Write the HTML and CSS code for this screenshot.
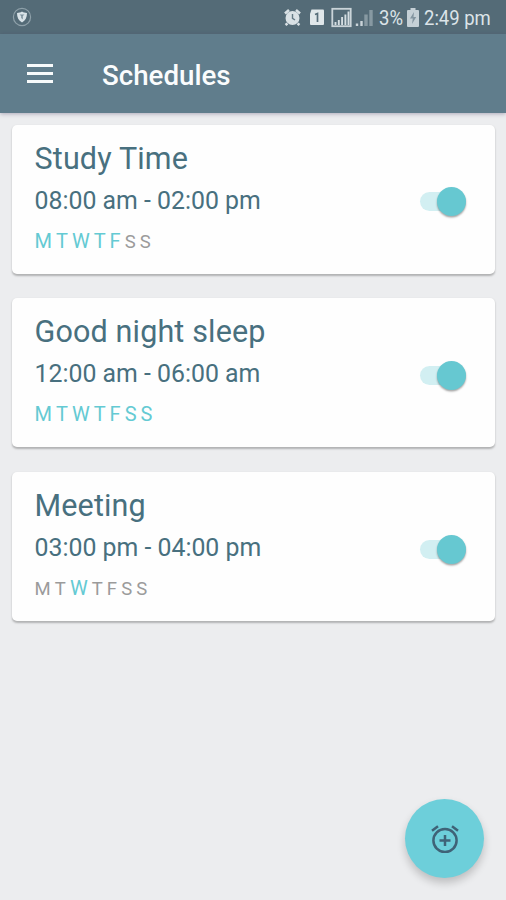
FILE: index.html
```
<!DOCTYPE html>
<html lang="en">
<head>
<meta charset="utf-8">
<meta name="viewport" content="width=device-width, initial-scale=1">
<title>Schedules</title>
<link rel="stylesheet" href="styles.css">
</head>
<body>

<div class="statusbar">
  <svg class="shield" width="20" height="20" viewBox="0 0 20 20">
    <circle cx="10" cy="10" r="8.6" fill="none" stroke="#8ea0a9" stroke-width="1.2"/>
    <path d="M10 4.6C8.5 5.6 7 6 5 6c0 4.500 1.500 7.500 5 9.600 3.500-2.100 5-5.100 5-9.600-2 0-3.500-.4-5-1.400z" fill="#d9e3e8"/>
    <path d="M7.500 7.500h5L10.800 9v3.500L9.200 11V9z" fill="#7d929d"/>
  </svg>
  <div class="status-right">
    <svg class="status-icons" width="92" height="22" viewBox="0 0 92 22">
      <circle cx="9.500" cy="12" r="7" fill="#d9e1e5"/>
      <path d="M2 7.500l4-3.500M17 7.500l-4-3.500M4.500 17.500l-2 1.500M14.500 17.500l2 1.500" stroke="#d9e1e5" stroke-width="2.600"/>
      <path d="M9.500 8v4.300l2.500 1.700" fill="none" stroke="#647984" stroke-width="1.400"/>
      <path d="M28.500 3.500H40q1 0 1 1V18q0 1-1 1H28q-1 0-1-1V8z" fill="#e0e7ea"/>
      <path d="M32 8.500l2.500-1V16" fill="none" stroke="#566d79" stroke-width="1.700"/>
      <rect x="49.300" y="2.800" width="18.400" height="17.400" fill="none" stroke="#cad4d9" stroke-width="1.800"/>
      <path d="M52.500 19v-3M55.800 19v-5M59.100 19v-8M62.400 19V8.500M65.500 19V5.500" stroke="#d5dee2" stroke-width="1.900"/>
      <path d="M74 20v-2.500M78.500 20v-5" stroke="#cad4d9" stroke-width="2.400"/>
      <path d="M83 20V8.500M88 20V4" stroke="#8799a2" stroke-width="3.400"/>
    </svg>
    <span class="battery-level">3%</span>
    <svg class="battery" width="12" height="19" viewBox="0 0 12 19">
      <path d="M3.500 0h5v2H11q1 0 1 1v15q0 1-1 1H1q-1 0-1-1V3q0-1 1-1h2.500z" fill="#c5d0d6"/>
      <path d="M7 4L3 10.500h2.800L5 16l4.200-7H6.500z" fill="#8395a0"/>
    </svg>
    <span class="clock">2:49 pm</span>
  </div>
</div>

<div class="header">
  <svg class="menu" width="26" height="20" viewBox="0 0 26 20">
    <path d="M0 1.500h26M0 9.500h26M0 17.500h26" stroke="#f7fafb" stroke-width="3"/>
  </svg>
  <h1>Schedules</h1>
</div>

<div class="list">
  <div class="card">
    <div class="info">
      <h2>Study Time</h2>
      <p class="time">08:00 am - 02:00 pm</p>
      <p class="days"><b>M</b><b>T</b><b>W</b><b>T</b><b>F</b><span>S</span><span>S</span></p>
    </div>
    <div class="switch"></div>
  </div>
  <div class="card">
    <div class="info">
      <h2>Good night sleep</h2>
      <p class="time">12:00 am - 06:00 am</p>
      <p class="days"><b>M</b><b>T</b><b>W</b><b>T</b><b>F</b><b>S</b><b>S</b></p>
    </div>
    <div class="switch"></div>
  </div>
  <div class="card">
    <div class="info">
      <h2>Meeting</h2>
      <p class="time">03:00 pm - 04:00 pm</p>
      <p class="days"><span>M</span><span>T</span><b>W</b><span>T</span><span>F</span><span>S</span><span>S</span></p>
    </div>
    <div class="switch"></div>
  </div>
</div>

<!-- Add schedule button -->
<div class="fab">
  <svg width="28" height="28" viewBox="0 0 28 28" fill="none" stroke="#3f6377" stroke-width="2.500">
    <circle cx="14" cy="15.500" r="11.600"/>
    <path d="M14 10v11M8.500 15.500h11M1 5.800l6-4.600M27 5.800l-6-4.600"/>
  </svg>
</div>

</body>
</html>
```
FILE: styles.css
```
* {
  box-sizing: border-box;
}

body {
  margin: 0;
  height: 900px;
  overflow: hidden;
  font-family: Roboto, "Liberation Sans", sans-serif;
  background: #ecedef;
}

h1, h2, p {
  margin: 0;
  font-weight: 400;
}

/* Phone status bar */
.statusbar {
  display: flex;
  justify-content: space-between;
  height: 34px;
  padding: 0 14px 0 12px;
  background: #546b77;
}

.shield {
  margin-top: 7px;
}

.status-right {
  display: flex;
  color: #dce4e8;
  font-size: 21px;
  line-height: 36px;
  white-space: nowrap;
}

.status-icons {
  margin: 6px 4px 0 0;
}

.battery-level,
.clock {
  transform: scaleX(0.88);
  transform-origin: left;
}

.battery-level {
  width: 27px;
}

.battery {
  margin: 8px 5px 0 1px;
}

.clock {
  width: 68px;
}

/* Title bar */
.header {
  display: flex;
  align-items: center;
  height: 79px;
  padding: 0 27px;
  background: #607d8c;
  box-shadow: 0 1px 4px rgba(60, 50, 90, 0.35);
}

.menu {
  margin-right: 49px;
}

h1 {
  padding-top: 3px;
  font-size: 27.700px;
  font-weight: 500;
  color: #fafcfd;
}

/* Schedule cards */
.list {
  display: flex;
  flex-direction: column;
  gap: 24.600px;
  padding: 11.600px 11px 0 12px;
}

.card {
  display: flex;
  justify-content: space-between;
  height: 149px;
  padding: 14px 29px 0 22.500px;
  border-radius: 5px;
  background: #fefefe;
  box-shadow: 0 1.500px 2px rgba(0, 0, 0, 0.25);
}

h2 {
  font-size: 30.500px;
  line-height: 40px;
  letter-spacing: 0.150px;
  color: #48707f;
}

.time {
  font-size: 24.850px;
  line-height: 44px;
  color: #48707f;
}

.days {
  display: flex;
  align-items: baseline;
  line-height: 36px;
}

.days b {
  font-size: 20px;
  font-weight: 400;
  letter-spacing: 4px;
  color: #64cad3;
}

.days span {
  font-size: 18.500px;
  letter-spacing: 4.100px;
  color: #9b9b9b;
}

/* Toggle, always on */
.switch {
  position: relative;
  width: 46px;
  height: 19px;
  margin-top: 53.800px;
  border-radius: 10px;
  background: #d2eff2;
}

.switch:after {
  content: "";
  position: absolute;
  top: -5px;
  right: 0;
  width: 29px;
  height: 29px;
  border-radius: 50%;
  background: #66c8d1;
  box-shadow: 0 1.500px 2px rgba(0, 0, 0, 0.35);
}

/* Floating button */
.fab {
  position: absolute;
  right: 22px;
  bottom: 22px;
  display: flex;
  align-items: center;
  justify-content: center;
  width: 79px;
  height: 79px;
  border-radius: 50%;
  background: #6dcfda;
  box-shadow: 0 5px 9px rgba(0, 0, 0, 0.2);
}
```
